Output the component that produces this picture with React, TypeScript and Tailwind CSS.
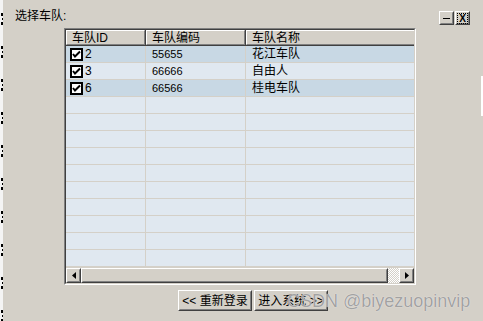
import React from 'react'

const font = "font-['Liberation_Sans','Noto_Sans_CJK_SC',sans-serif]"

const rows = [
  { id: '2', code: '55655', name: '花江车队' },
  { id: '3', code: '66666', name: '自由人' },
  { id: '6', code: '66566', name: '桂电车队' },
]

function Raised({ className = '', children }: { className?: string; children?: React.ReactNode }) {
  return (
    <div className={`border border-t-white border-l-white border-r-[#404040] border-b-[#404040] bg-[#d4d0c8] ${className}`}>
      <div className="w-full h-full border border-t-[#d4d0c8] border-l-[#d4d0c8] border-r-[#808080] border-b-[#808080] flex items-center justify-center">
        {children}
      </div>
    </div>
  )
}

function Check() {
  return (
    <div className="w-[13px] h-[13px] border-2 border-black bg-white flex items-center justify-center">
      <svg width="9" height="9" viewBox="0 0 9 9">
        <path d="M1 4 L3 6.5 L8 1.5" stroke="black" strokeWidth="2" fill="none" />
      </svg>
    </div>
  )
}

function HeadCell({ w, label }: { w: string; label: string }) {
  return (
    <div className={`${w} h-[16px] border-r border-b border-[#404040]`}>
      <div className="h-full border border-t-white border-l-white border-r-[#808080] border-b-[#808080] pl-[5px] flex items-center text-[12px] text-black">
        {label}
      </div>
    </div>
  )
}

export default function App() {
  const empty = Array.from({ length: 10 })
  return (
    <div className={`w-[483px] h-[321px] bg-[#d4d0c8] flex overflow-hidden relative ${font}`}>
      {/* clipped glyph fragments on the left edge */}
      <div className="w-[3px] h-full bg-[#f4f4f4] flex flex-col pt-[13px] gap-[21px]">
        {Array.from({ length: 10 }).map((_, i) => (
          <div key={i} className="flex flex-col gap-[2px] items-end">
            <div className="w-[2px] h-[3px] bg-black" />
            <div className="w-[1px] h-[2px] bg-black" />
            <div className="w-[2px] h-[3px] bg-black" />
          </div>
        ))}
      </div>

      <div className="flex-1 flex flex-col">
        <div className="h-[28px] flex">
          <div className="ml-[12px] mt-[9px] text-[12px] leading-[14px] text-black">选择车队:</div>
          <div className="ml-auto mr-[13px] mt-[11px] flex">
            <Raised className="w-[15px] h-[14px]">
              <div className="w-[7px] h-[1px] bg-black" />
            </Raised>
            <Raised className="w-[15px] h-[14px] ml-[1px]">
              <div className="border border-dotted border-black px-[1px] text-[10px] leading-[9px] font-bold">X</div>
            </Raised>
          </div>
        </div>

        {/* table */}
        <div className="ml-[61px] w-[352px] h-[257px] border border-t-[#808080] border-l-[#808080] border-r-white border-b-white">
          <div className="w-full h-full border border-t-[#404040] border-l-[#404040] border-r-[#d4d0c8] border-b-[#d4d0c8] flex flex-col">
            <div className="flex">
              <HeadCell w="w-[80px]" label="车队ID" />
              <HeadCell w="w-[100px]" label="车队编码" />
              <div className="flex-1 h-[16px] border-b border-[#404040]">
                <div className="h-full border border-t-white border-l-white border-r-0 border-b-[#808080] pl-[5px] flex items-center text-[12px] text-black">
                  车队名称
                </div>
              </div>
            </div>

            <div className="flex-1 flex flex-col">
              {rows.map((r, i) => (
                <div key={r.id} className={`flex h-[17px] border-b border-[#d4d0c8] ${i % 2 === 0 ? 'bg-[#c8d8e4]' : 'bg-[#e0e8f0]'}`}>
                  <div className="w-[80px] border-r border-[#d4d0c8] flex items-center pl-[4px] gap-[2px] text-[12px]">
                    <Check />
                    <span>{r.id}</span>
                  </div>
                  <div className="w-[100px] border-r border-[#d4d0c8] flex items-center pl-[6px] text-[11px]">{r.code}</div>
                  <div className="flex-1 flex items-center pl-[6px] text-[12px]">{r.name}</div>
                </div>
              ))}
              {empty.map((_, i) => (
                <div key={i} className="flex h-[17px] border-b border-[#d4d0c8] bg-[#e0e8f0]">
                  <div className="w-[80px] border-r border-[#d4d0c8]" />
                  <div className="w-[100px] border-r border-[#d4d0c8]" />
                  <div className="flex-1" />
                </div>
              ))}
            </div>

            {/* horizontal scrollbar */}
            <div className="h-[15px] flex">
              <Raised className="w-[15px] h-[15px]">
                <svg width="4" height="7" viewBox="0 0 4 7"><path d="M4 0 L0 3.5 L4 7 Z" fill="black" /></svg>
              </Raised>
              <Raised className="w-[307px] h-[15px]" />
              <div className="flex-1 h-[15px] bg-[image:repeating-conic-gradient(#d4d0c8_0_25%,#ffffff_0_50%)] bg-size-[2px_2px]" />
              <Raised className="w-[15px] h-[15px]">
                <svg width="4" height="7" viewBox="0 0 4 7"><path d="M0 0 L4 3.5 L0 7 Z" fill="black" /></svg>
              </Raised>
            </div>
          </div>
        </div>

        {/* buttons */}
        <div className="mt-[5px] ml-[175px] flex gap-[2px]">
          <Raised className="w-[74px] h-[21px]">
            <span className="text-[12px] text-black whitespace-nowrap">&lt;&lt; 重新登录</span>
          </Raised>
          <Raised className="w-[74px] h-[21px]">
            <span className="text-[12px] text-black whitespace-nowrap">进入系统 &gt;&gt;</span>
          </Raised>
        </div>
      </div>

      {/* right edge mark */}
      <div className="absolute right-0 top-[76px] w-[2px] h-[40px] bg-white" />

      {/* watermark */}
      <div className="absolute left-[287px] top-[290px] text-[18px] leading-[22px] text-[#a2a2a2] [text-shadow:0_0_1px_#ffffff] font-['Liberation_Sans',sans-serif] whitespace-nowrap">
        CSDN @biyezuopinvip
      </div>
    </div>
  )
}
